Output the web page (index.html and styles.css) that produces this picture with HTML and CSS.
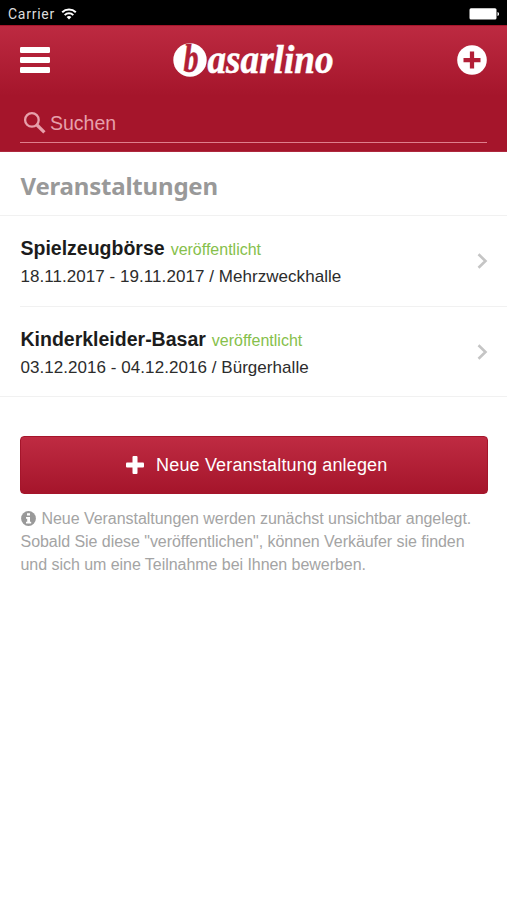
FILE: index.html
```html
<!DOCTYPE html>
<html lang="de">
<head>
<meta charset="utf-8">
<title>basarlino</title>
<link rel="stylesheet" href="styles.css">
</head>
<body>
<div class="status">
  <span class="carrier">Carrier</span>
  <svg class="wifi" width="16" height="12" viewBox="0 0 16 12" fill="none" stroke="#fff" stroke-width="2"><path d="M1.2 4.3a9.8 9.8 0 0 1 13.6 0M3.7 7.1a6.1 6.1 0 0 1 8.6 0"/><path d="M8 11.5 5.6 9.1a3.4 3.4 0 0 1 4.8 0z" fill="#fff" stroke="none"/></svg>
  <svg class="battery" width="31" height="12" viewBox="0 0 31 12" fill="#fff"><rect x=".5" y=".3" width="27" height="11.2" rx="1.5"/><path d="M28.5 4c2 .5 2 3.500 0 4z"/></svg>
</div>
<header class="header">
  <div class="bar">
    <svg width="30" height="26" viewBox="0 0 30 26" fill="#fff"><rect width="30" height="6" rx="1.2"/><rect y="10" width="30" height="6" rx="1.2"/><rect y="20" width="30" height="6" rx="1.2"/></svg>
    <svg class="logo" width="174" height="50" viewBox="0 -3 174 50">
      <ellipse cx="19" cy="22" rx="16.700" ry="16.700" fill="#fff"/>
      <text class="logo-text logo-b" x="12.500" y="34.200" textLength="15" lengthAdjust="spacingAndGlyphs">b</text>
      <text class="logo-text" x="36.500" y="35" textLength="126" lengthAdjust="spacingAndGlyphs">asarlino</text>
    </svg>
    <svg width="30" height="30" viewBox="0 0 30 30"><circle cx="15" cy="15" r="14.800" fill="#fff"/><path d="M15 7.500v15M7.500 15h15" stroke="#b21f36" stroke-width="5" stroke-linecap="square" transform="translate(2.250 2.250) scale(.85)"/></svg>
  </div>
  <div class="search">
    <svg width="24" height="24" viewBox="0 0 24 24" fill="none" stroke="#e7a0ab"><circle cx="8.900" cy="8.900" r="6.800" stroke-width="2.300"/><path d="m14 14 7.400 7.400" stroke-width="3.200"/></svg>
    <span>Suchen</span>
  </div>
</header>
<main>
  <h1>Veranstaltungen</h1>
  <div class="list">
    <div class="item">
      <div><div class="title"><b>Spielzeugbörse</b><span>veröffentlicht</span></div><p>18.11.2017 - 19.11.2017 / Mehrzweckhalle</p></div>
      <svg width="11" height="16" viewBox="0 0 11 16" fill="none" stroke="#c5c5c5" stroke-width="2.600"><path d="m1.500 1.200 7 6.800-7 6.800"/></svg>
    </div>
    <div class="item">
      <div><div class="title"><b>Kinderkleider-Basar</b><span>veröffentlicht</span></div><p>03.12.2016 - 04.12.2016 / Bürgerhalle</p></div>
      <svg width="11" height="16" viewBox="0 0 11 16" fill="none" stroke="#c5c5c5" stroke-width="2.600"><path d="m1.500 1.200 7 6.800-7 6.800"/></svg>
    </div>
  </div>
  <div class="button">
    <svg width="18" height="18" viewBox="0 0 18 18" fill="#fff"><rect x="6.500" width="5" height="18" rx="1"/><rect y="6.500" width="18" height="5" rx="1"/></svg>
    <span>Neue Veranstaltung anlegen</span>
  </div>
  <div class="info">
    <div class="line first"><svg width="15" height="15" viewBox="0 0 15 15"><circle cx="7.500" cy="7.500" r="7.400" fill="#999"/><path d="M6 2.300h3v2.200H6zM5 6h4v4.800h1.200v1.700H5v-1.700h1.200V7.700H5z" fill="#fff"/></svg><span>Neue Veranstaltungen werden zunächst unsichtbar angelegt.</span></div>
    <div class="line">Sobald Sie diese "veröffentlichen", können Verkäufer sie finden</div>
    <div class="line">und sich um eine Teilnahme bei Ihnen bewerben.</div>
  </div>
</main>
</body>
</html>
```
FILE: styles.css
```css
* { box-sizing: border-box; }
body { margin: 0; background: #fff; color: #1c1c1c; font-family: "Liberation Sans", Arial, sans-serif; white-space: nowrap; }
svg { display: block; flex: none; }
h1, p { margin: 0; }
.status { height: 25px; background: #000; color: #ddd; display: flex; align-items: center; padding: 2px 7px 0 8px; }
.carrier { font: 14px/20px Roboto, sans-serif; letter-spacing: .75px; }
.wifi { margin-left: 6px; }
.battery { margin-left: auto; }
.header { height: 127px; padding: 0 20px; background: linear-gradient(#bd2a41 0, #a5152b 70px, #a5152b 125px, #b73c50 100%); border-top: 1px solid #a5152b; }
.bar { height: 67px; display: flex; align-items: center; justify-content: space-between; }
.logo { margin-left: 9px; overflow: visible; }
.logo-text { font: italic bold 39px/1 "Liberation Serif", serif; fill: #fff; stroke: #fff; stroke-width: .5px; }
.logo-b { fill: #b21f36; stroke: #b21f36; }
.search { height: 50px; border-bottom: 1.500px solid #df7e8c; display: flex; align-items: center; padding: 11px 0 0 3px; color: #e7a0ab; font-size: 19.500px; }
.search span { margin-left: 3px; padding-top: 1px; }
h1 { height: 64px; padding: 5px 20px 0 20.500px; border-bottom: 1px solid #f1f1f1; color: #999; font: bold 24px/58px "Noto Sans", sans-serif; letter-spacing: -.2px; }
.list { border-bottom: 1px solid #f1f1f1; }
.item { height: 90px; margin-left: 20px; padding: 0 19px 0 .5px; display: flex; justify-content: space-between; align-items: center; }
.item + .item { border-top: 1px solid #f1f1f1; }
.title { font-size: 16px; line-height: 28px; color: #86c04b; display: flex; align-items: baseline; gap: 6px; padding-top: 2px; }
.title b { color: #1c1c1c; font-size: 19.500px; }
.item p { font-size: 17px; line-height: 25px; padding-bottom: 1px; letter-spacing: .05px; color: #2c2c2c; }
.button { margin: 39px 19.500px 0 20px; height: 58px; border: 1px solid #a5152b; border-radius: 4px; background: linear-gradient(#bf2b42, #a5152b); color: #fff; display: flex; align-items: center; justify-content: center; gap: 12px; padding-left: 6px; font-size: 18px; letter-spacing: .16px; }
.info { margin: 13px 20px 0 20.500px; color: #a4a4a4; font-size: 16px; line-height: 23px; letter-spacing: -.045px; }
.line { height: 23px; }
.first { display: flex; align-items: center; gap: 6px; }
```
